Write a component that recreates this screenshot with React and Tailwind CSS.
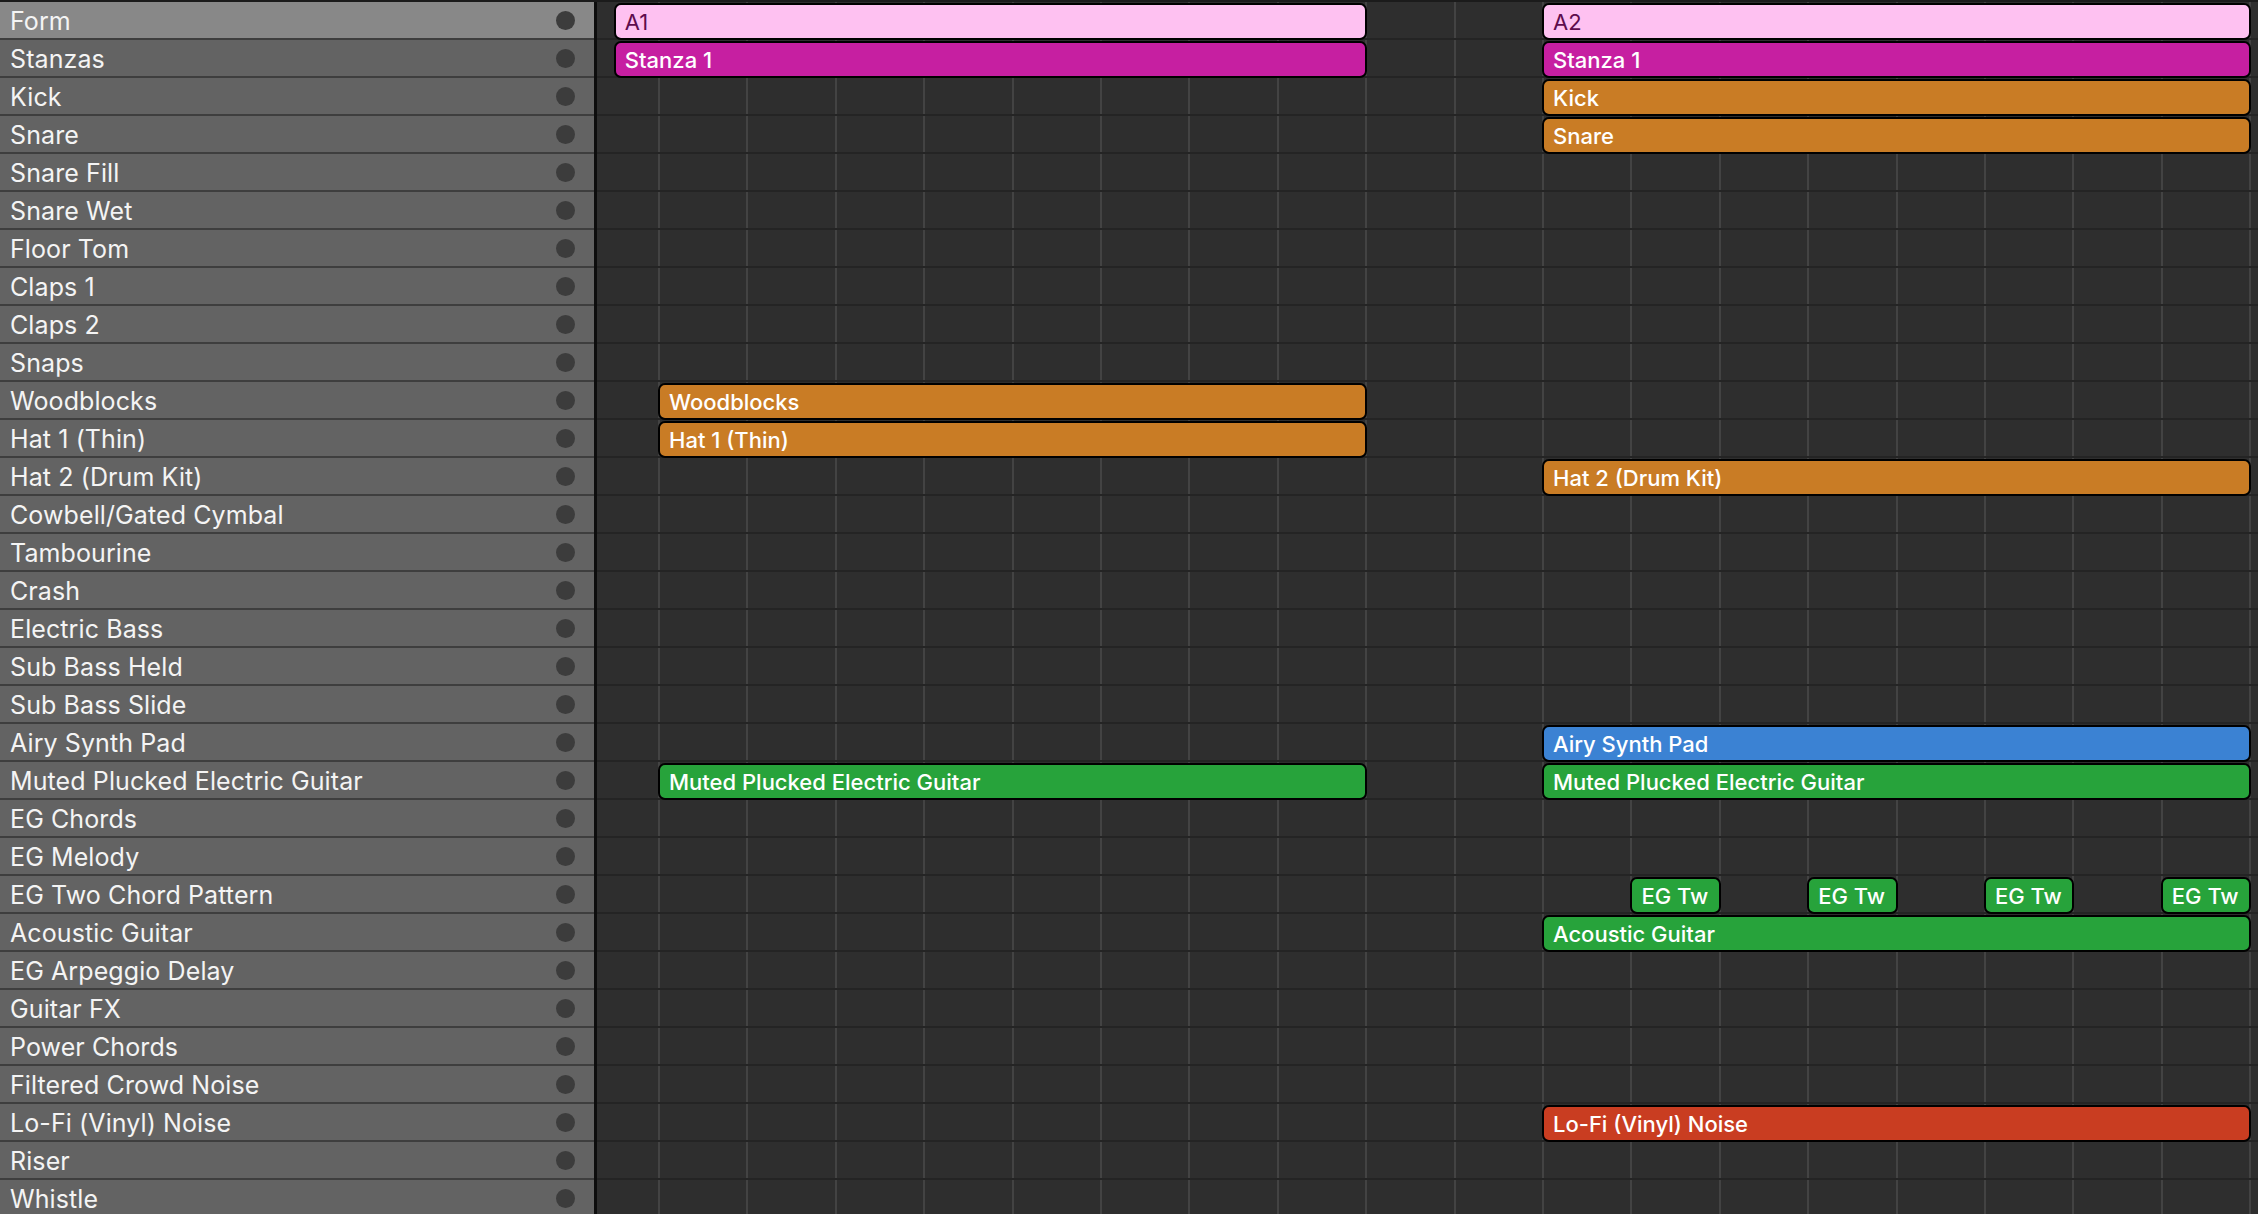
import React from 'react';

const tracks = [
  'Form', 'Stanzas', 'Kick', 'Snare', 'Snare Fill', 'Snare Wet', 'Floor Tom', 'Claps 1',
  'Claps 2', 'Snaps', 'Woodblocks', 'Hat 1 (Thin)', 'Hat 2 (Drum Kit)', 'Cowbell/Gated Cymbal',
  'Tambourine', 'Crash', 'Electric Bass', 'Sub Bass Held', 'Sub Bass Slide', 'Airy Synth Pad',
  'Muted Plucked Electric Guitar', 'EG Chords', 'EG Melody', 'EG Two Chord Pattern',
  'Acoustic Guitar', 'EG Arpeggio Delay', 'Guitar FX', 'Power Chords', 'Filtered Crowd Noise',
  'Lo-Fi (Vinyl) Noise', 'Riser', 'Whistle',
];

const colors = {
  pink: 'bg-[#fec1f1] text-[#5e0c4d]',
  magenta: 'bg-[#c61fa1] text-white',
  orange: 'bg-[#c97c25] text-white',
  green: 'bg-[#27a33b] text-white',
  blue: 'bg-[#3b82d3] text-white',
  red: 'bg-[#c93d21] text-white',
};

// regions per track row, in bars
const regions = {
  0: [{ from: -0.5, to: 8, name: 'A1', c: 'pink' }, { from: 10, to: 18, name: 'A2', c: 'pink' }],
  1: [{ from: -0.5, to: 8, name: 'Stanza 1', c: 'magenta' }, { from: 10, to: 18, name: 'Stanza 1', c: 'magenta' }],
  2: [{ from: 10, to: 18, name: 'Kick', c: 'orange' }],
  3: [{ from: 10, to: 18, name: 'Snare', c: 'orange' }],
  10: [{ from: 0, to: 8, name: 'Woodblocks', c: 'orange' }],
  11: [{ from: 0, to: 8, name: 'Hat 1 (Thin)', c: 'orange' }],
  12: [{ from: 10, to: 18, name: 'Hat 2 (Drum Kit)', c: 'orange' }],
  19: [{ from: 10, to: 18, name: 'Airy Synth Pad', c: 'blue' }],
  20: [{ from: 0, to: 8, name: 'Muted Plucked Electric Guitar', c: 'green' }, { from: 10, to: 18, name: 'Muted Plucked Electric Guitar', c: 'green' }],
  23: [11, 13, 15, 17].map((b) => ({ from: b, to: b + 1, name: 'EG Tw', c: 'green' })),
  24: [{ from: 10, to: 18, name: 'Acoustic Guitar', c: 'green' }],
  29: [{ from: 10, to: 18, name: 'Lo-Fi (Vinyl) Noise', c: 'red' }],
};

const ORIGIN = 61;
const BAR = 88.4;
const bars = Array.from({ length: 19 }, (_, i) => i);

const font = { fontFamily: 'Inter, "Noto Sans", sans-serif' };

const App = () => {
  return (
    <div className="w-[2258px] h-[1214px] overflow-hidden bg-[#1b1b1b] pt-[2px] flex" style={font}>
      <div className="w-[594px] shrink-0 flex flex-col">
        {tracks.map((t, i) => (
          <div
            key={i}
            className={`h-[38px] shrink-0 border-b-2 border-[#3e3e3e] flex items-center justify-between pl-[10px] pr-[19px] ${i === 0 ? 'bg-[#888888]' : 'bg-[#636363]'}`}
          >
            <span className="text-[25px] leading-none text-[#f4f4f4] tracking-[0.1px] pt-[2px]">{t}</span>
            <span className="w-[19px] h-[19px] rounded-full bg-[#3c3c3c]" />
          </div>
        ))}
      </div>
      <div className="w-[3px] shrink-0 bg-[#0d0d0d]" />
      <div className="relative flex-1 bg-[#2e2e2e] flex flex-col overflow-hidden">
        {bars.map((b) => (
          <div
            key={b}
            className="absolute top-0 bottom-0 w-[2px] bg-[#434343]"
            style={{ left: ORIGIN + b * BAR }}
          />
        ))}
        {tracks.map((t, i) => (
          <div key={i} className="relative h-[38px] shrink-0 border-b-2 border-[#242424]">
            {(regions[i] || []).map((r, j) => (
              <div
                key={j}
                className={`absolute top-[1px] h-[37px] z-10 border-2 border-black rounded-[7px] flex items-center pl-[9px] overflow-hidden whitespace-nowrap ${colors[r.c]}`}
                style={{ left: ORIGIN + r.from * BAR, width: (r.to - r.from) * BAR + 2 }}
              >
                <span className={`text-[22px] leading-none pt-[1px] ${r.c === 'pink' ? 'font-normal' : 'font-medium'}`}>{r.name}</span>
              </div>
            ))}
          </div>
        ))}
      </div>
    </div>
  );
};

export default App;
